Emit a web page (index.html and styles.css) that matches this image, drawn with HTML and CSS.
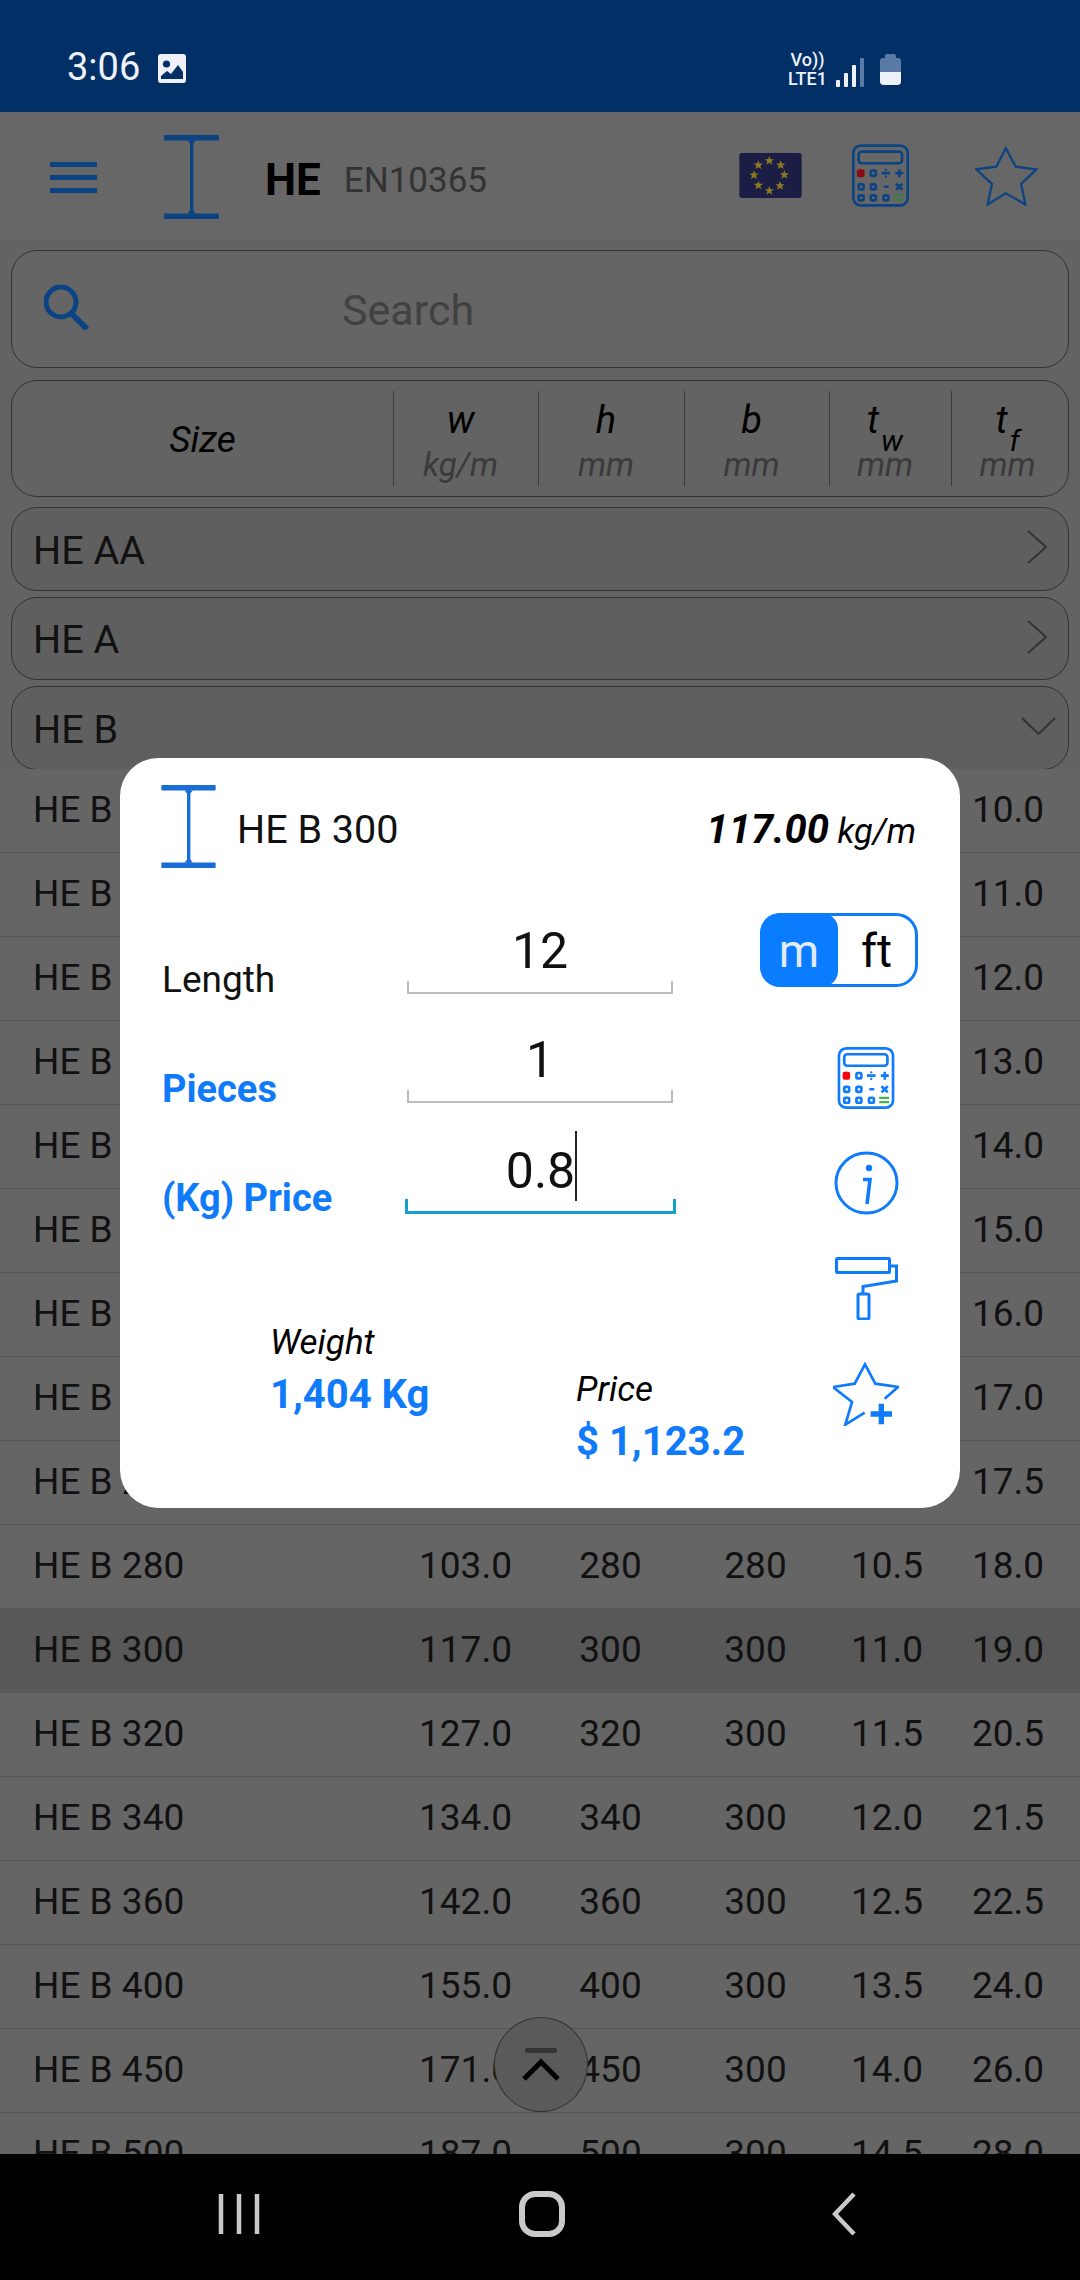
FILE: index.html
```html
<!DOCTYPE html>
<html lang="en">
<head>
    <meta charset="UTF-8">
    <meta name="viewport" content="width=device-width, initial-scale=1.0">
    <title>HE EN10365</title>
    <link rel="stylesheet" href="styles.css">
</head>
<body>

<!-- shared icons -->
<svg class="icon-defs" aria-hidden="true">
    <defs>
        <symbol id="beam" viewBox="0 0 55 84">
            <rect x="0" y="0" width="55" height="5.5" rx="1" fill="currentColor"/>
            <rect x="26" y="4" width="3.4" height="76" fill="currentColor"/>
            <path d="M23.5 5.5h8.4l-2.5 3h-3.4zM23.5 78.5h8.4l-2.5-3h-3.4z" fill="currentColor"/>
            <rect x="0" y="78.5" width="55" height="5.5" rx="1" fill="currentColor"/>
        </symbol>
        <symbol id="calc" viewBox="112 78 172 188">
            <g fill="none" stroke="currentColor" stroke-width="8">
                <rect x="116" y="82" width="164" height="180" rx="22"/>
                <rect x="132" y="100" width="131" height="35" rx="9"/>
                <rect x="169" y="157" width="15" height="16" rx="4"/>
                <rect x="132" y="199" width="15" height="15" rx="4"/>
                <rect x="169" y="199" width="15" height="15" rx="4"/>
                <rect x="132" y="232" width="15" height="15" rx="4"/>
                <rect x="169" y="232" width="15" height="15" rx="4"/>
                <rect x="207" y="232" width="15" height="15" rx="4"/>
                <path d="M201 165h26M243 165h24M255 153v24M208 206h15M245 197l19 18M264 197l-19 18"/>
            </g>
            <circle cx="214" cy="155" r="3.5" fill="currentColor"/>
            <circle cx="214" cy="175" r="3.5" fill="currentColor"/>
            <rect class="calc-red" x="127" y="153" width="23" height="24" rx="6"/>
            <path class="calc-green" d="M238 232h30M238 245h30" fill="none" stroke-width="7"/>
        </symbol>
        <polygon id="eu-star" points="0,-14 3.800,-4.500 14,-4.500 6,2 9,12 0,6.500 -9,12 -6,2 -14,-4.500 -3.800,-4.500"/>
    </defs>
</svg>

<div class="app">

    <header class="status-bar">
        <span class="status-time">3:06</span>
        <svg class="status-pic" viewBox="0 0 28 29">
            <rect width="28" height="29" rx="3" fill="#eef2f8"/>
            <circle cx="8.500" cy="10" r="3.600" fill="#012f66"/>
            <path d="M3 25v-3l6-5 4 3 7-9 5 7v7z" fill="#012f66"/>
        </svg>
        <div class="status-right">
            <div class="status-net">
                <span>Vo))</span>
                <span>LTE1</span>
            </div>
            <div class="signal">
                <i class="bar-1"></i>
                <i class="bar-2"></i>
                <i class="bar-3"></i>
                <i class="bar-4"></i>
            </div>
            <div class="battery"><div class="battery-level"></div></div>
        </div>
    </header>

    <div class="app-bar">
        <div class="menu-btn"><i></i><i></i><i></i></div>
        <svg class="app-beam"><use href="#beam"/></svg>
        <span class="app-title">HE</span>
        <span class="app-norm">EN10365</span>
        <svg class="eu-flag" viewBox="118 400 187 135">
            <rect x="118" y="400" width="187" height="135" rx="8" fill="#1b1d45"/>
            <g fill="#8b7b1f">
                <use href="#eu-star" x="208" y="423"/>
                <use href="#eu-star" x="242" y="436"/>
                <use href="#eu-star" x="253" y="465"/>
                <use href="#eu-star" x="240" y="498"/>
                <use href="#eu-star" x="208" y="513"/>
                <use href="#eu-star" x="175" y="497"/>
                <use href="#eu-star" x="162" y="466"/>
                <use href="#eu-star" x="175" y="436"/>
            </g>
        </svg>
        <svg class="app-calc"><use href="#calc"/></svg>
        <svg class="app-star" viewBox="825 378 190 180">
            <path d="M918 384l30 56 62 8-46 44 13 62-59-34-55 34 13-62-47-44 60-8z" fill="none" stroke="currentColor" stroke-width="7"/>
        </svg>
    </div>

    <div class="search-box">
        <svg class="search-icon" viewBox="0 0 46 46">
            <circle cx="17" cy="18" r="15" fill="none" stroke="currentColor" stroke-width="5"/>
            <path d="M28 30l15 15" stroke="currentColor" stroke-width="6"/>
        </svg>
        <span class="search-text">Search</span>
    </div>

    <div class="table-head">
        <div class="head-size">Size</div>
        <div class="head-col"><span class="head-sym">w</span><span class="head-unit">kg/m</span></div>
        <div class="head-col"><span class="head-sym">h</span><span class="head-unit">mm</span></div>
        <div class="head-col"><span class="head-sym">b</span><span class="head-unit">mm</span></div>
        <div class="head-col"><span class="head-sym">t<sub>w</sub></span><span class="head-unit">mm</span></div>
        <div class="head-col head-last"><span class="head-sym">t<sub>f</sub></span><span class="head-unit">mm</span></div>
    </div>

    <div class="group">
        <span>HE AA</span>
        <svg class="chev-right" viewBox="0 0 20 34"><path d="M1 1l18 16L1 33"/></svg>
    </div>
    <div class="group">
        <span>HE A</span>
        <svg class="chev-right" viewBox="0 0 20 34"><path d="M1 1l18 16L1 33"/></svg>
    </div>
    <div class="group">
        <span>HE B</span>
        <svg class="chev-down" viewBox="0 0 35 18"><path d="M1 1l16.500 16L34 1"/></svg>
    </div>

    <div class="size-list">
        <div class="size-row"><span>HE B 100</span><span>20.4</span><span>100</span><span>100</span><span>6.0</span><span>10.0</span></div>
        <div class="size-row"><span>HE B 120</span><span>26.7</span><span>120</span><span>120</span><span>6.5</span><span>11.0</span></div>
        <div class="size-row"><span>HE B 140</span><span>33.7</span><span>140</span><span>140</span><span>7.0</span><span>12.0</span></div>
        <div class="size-row"><span>HE B 160</span><span>42.6</span><span>160</span><span>160</span><span>8.0</span><span>13.0</span></div>
        <div class="size-row"><span>HE B 180</span><span>51.2</span><span>180</span><span>180</span><span>8.5</span><span>14.0</span></div>
        <div class="size-row"><span>HE B 200</span><span>61.3</span><span>200</span><span>200</span><span>9.0</span><span>15.0</span></div>
        <div class="size-row"><span>HE B 220</span><span>71.5</span><span>220</span><span>220</span><span>9.5</span><span>16.0</span></div>
        <div class="size-row"><span>HE B 240</span><span>83.2</span><span>240</span><span>240</span><span>10.0</span><span>17.0</span></div>
        <div class="size-row"><span>HE B 260</span><span>93.0</span><span>260</span><span>260</span><span>10.0</span><span>17.5</span></div>
        <div class="size-row"><span>HE B 280</span><span>103.0</span><span>280</span><span>280</span><span>10.5</span><span>18.0</span></div>
        <div class="size-row selected"><span>HE B 300</span><span>117.0</span><span>300</span><span>300</span><span>11.0</span><span>19.0</span></div>
        <div class="size-row"><span>HE B 320</span><span>127.0</span><span>320</span><span>300</span><span>11.5</span><span>20.5</span></div>
        <div class="size-row"><span>HE B 340</span><span>134.0</span><span>340</span><span>300</span><span>12.0</span><span>21.5</span></div>
        <div class="size-row"><span>HE B 360</span><span>142.0</span><span>360</span><span>300</span><span>12.5</span><span>22.5</span></div>
        <div class="size-row"><span>HE B 400</span><span>155.0</span><span>400</span><span>300</span><span>13.5</span><span>24.0</span></div>
        <div class="size-row"><span>HE B 450</span><span>171.0</span><span>450</span><span>300</span><span>14.0</span><span>26.0</span></div>
        <div class="size-row"><span>HE B 500</span><span>187.0</span><span>500</span><span>300</span><span>14.5</span><span>28.0</span></div>
    </div>

    <nav class="nav-bar">
        <svg class="nav-recents" viewBox="0 0 42 44">
            <path d="M3 2v40M21 2v40M39 2v40"/>
        </svg>
        <svg class="nav-home" viewBox="0 0 46 46">
            <rect x="3" y="3" width="40" height="40" rx="13"/>
        </svg>
        <svg class="nav-back" viewBox="0 0 24 44">
            <path d="M22 2L3 22l19 20"/>
        </svg>
    </nav>

    <!-- scroll to top, lies over the list -->
    <div class="scroll-top">
        <i class="scroll-bar"></i>
        <svg class="scroll-chev" viewBox="0 0 40 24"><path d="M3 21L20 4l17 17"/></svg>
    </div>

    <!-- piece dialog -->
    <section class="modal">
        <div class="modal-head">
            <svg class="modal-beam"><use href="#beam"/></svg>
            <span class="modal-name">HE B 300</span>
            <span class="modal-weight"><b>117.00</b> kg/m</span>
        </div>
        <div class="modal-body">
            <div class="modal-left">
                <div class="fields">
                    <div class="field">
                        <span class="field-label">Length</span>
                        <div class="field-input">12</div>
                    </div>
                    <div class="field">
                        <span class="field-label blue">Pieces</span>
                        <div class="field-input">1</div>
                    </div>
                    <div class="field">
                        <span class="field-label blue">(Kg) Price</span>
                        <div class="field-input focused">0.8<i class="caret"></i></div>
                    </div>
                </div>
                <div class="totals">
                    <div class="total total-weight">
                        <span class="total-label">Weight</span>
                        <span class="total-value">1,404 Kg</span>
                    </div>
                    <div class="total total-price">
                        <span class="total-label">Price</span>
                        <span class="total-value">$ 1,123.2</span>
                    </div>
                </div>
            </div>
            <div class="modal-side">
                <div class="unit-toggle">
                    <span class="unit active">m</span>
                    <span class="unit">ft</span>
                </div>
                <div class="side-icons">
                    <svg class="side-calc"><use href="#calc"/></svg>
                    <svg class="side-info" viewBox="0 0 65 64">
                        <ellipse cx="32.500" cy="32" rx="30.500" ry="30" fill="none" stroke="currentColor" stroke-width="3"/>
                        <circle cx="35" cy="17" r="3.200" fill="currentColor"/>
                        <path d="M29 28.500h7L33 53" fill="none" stroke="currentColor" stroke-width="3.600"/>
                    </svg>
                    <svg class="side-roller" viewBox="0 0 63 63">
                        <g fill="none" stroke="currentColor" stroke-width="3">
                            <rect x="1.500" y="1.500" width="53" height="14" rx="1"/>
                            <path d="M55 9h6.500v15L28 29.500V37"/>
                            <rect x="23" y="37" width="11" height="25" rx="1.500"/>
                        </g>
                    </svg>
                    <svg class="side-star" viewBox="100 60 198 192">
                        <path d="M255 170l40-35-68-10-31-58-31 58-65 10 57 45-20 68 58-36" fill="none" stroke="currentColor" stroke-width="8"/>
                        <path d="M213 216h64M245 185v62" fill="none" stroke="currentColor" stroke-width="16"/>
                    </svg>
                </div>
            </div>
        </div>
    </section>

</div>

</body>
</html>
```

FILE: styles.css
```css
* {
    box-sizing: border-box;
}

body {
    margin: 0;
    font-family: Roboto, "Liberation Sans", sans-serif;
    background-color: #636363;
}

.icon-defs {
    position: absolute;
    width: 0;
    height: 0;
}

.app {
    position: relative;
    display: flex;
    flex-direction: column;
    width: 1080px;
    height: 2280px;
    overflow: hidden;
    color: #111;
    background-color: #636363;
}

/* status bar */
.status-bar {
    display: flex;
    align-items: center;
    flex-shrink: 0;
    height: 112px;
    padding: 0 179px 0 67px;
    background-color: #012f66;
    color: #eef2f8;
}

.status-time {
    font-size: 38px;
    line-height: 40px;
    margin-top: 21px;
}

.status-pic {
    width: 28px;
    height: 29px;
    margin: 25px 0 0 18px;
}

.status-right {
    display: flex;
    align-items: flex-end;
    margin-left: auto;
    margin-top: 25px;
}

.status-net {
    display: flex;
    flex-direction: column;
    align-items: center;
    font-size: 18px;
    line-height: 19px;
    font-weight: 500;
    margin-right: 9px;
}

.signal {
    display: flex;
    align-items: flex-end;
    gap: 4px;
    margin-bottom: 1px;
}

.signal i {
    display: block;
    width: 4px;
    background-color: #eef2f8;
    border-radius: 1px;
}

.bar-1 { height: 7px; }
.bar-2 { height: 14px; }
.bar-3 { height: 22px; }

.signal .bar-4 {
    height: 29px;
    background-color: #5a7ba5;
}

.battery {
    position: relative;
    display: flex;
    align-items: flex-end;
    width: 21px;
    height: 27px;
    margin: 0 0 3px 16px;
    background-color: #5a7ba5;
    border-radius: 3px 3px 4px 4px;
}

.battery::before {
    content: "";
    position: absolute;
    top: -4px;
    left: 5px;
    width: 11px;
    height: 4px;
    background-color: #5a7ba5;
    border-radius: 2px 2px 0 0;
}

.battery-level {
    width: 100%;
    height: 13px;
    background-color: #eef2f8;
    border-radius: 0 0 4px 4px;
}

/* app bar */
.app-bar {
    display: flex;
    align-items: center;
    flex-shrink: 0;
    height: 127px;
    padding-left: 50px;
    background-color: #676767;
    color: #0c4483;
}

.menu-btn {
    display: flex;
    flex-direction: column;
    gap: 8px;
    width: 47px;
    margin-top: 4px;
}

.menu-btn i {
    display: block;
    height: 5px;
    background-color: currentColor;
}

.app-beam {
    width: 55px;
    height: 84px;
    margin: 2px 0 0 67px;
}

.app-title {
    font-size: 44px;
    font-weight: 700;
    color: #000;
    margin: 9px 0 0 46px;
}

.app-norm {
    font-size: 35px;
    color: #333;
    margin: 9px 0 0 23px;
}

.eu-flag {
    width: 63px;
    height: 45px;
    margin: 0 0 0 252px;
}

.app-calc {
    width: 57px;
    height: 63px;
    margin: 0 0 0 50px;
    --red: #8a0b10;
    --green: #3d7a4a;
}

.app-star {
    width: 63px;
    height: 60px;
    margin: 0 0 0 66px;
}

.calc-red {
    fill: var(--red, #f5060f);
}

.calc-green {
    stroke: var(--green, #4caf50);
}

/* search */
.search-box {
    display: flex;
    align-items: center;
    flex-shrink: 0;
    height: 118px;
    margin: 11px 11px 0;
    padding-left: 32px;
    border: 1.500px solid #333;
    border-radius: 26px;
    background-color: #656565;
}

.search-icon {
    width: 46px;
    height: 46px;
    color: #0c4483;
    margin-top: -4px;
}

.search-text {
    font-size: 43px;
    color: #414141;
    margin-left: 252px;
    margin-top: 1px;
}

/* column titles */
.table-head {
    display: grid;
    grid-template-columns: 381px 145px 146px 145px 122px 1fr;
    flex-shrink: 0;
    height: 117px;
    margin: 12px 11px 0;
    padding: 10px 0;
    border: 1.500px solid #333;
    border-radius: 26px;
    font-style: italic;
}

.head-size {
    align-self: center;
    text-align: center;
    font-size: 37px;
    color: #000;
    margin-top: 2px;
}

.head-col {
    display: flex;
    flex-direction: column;
    align-items: center;
    padding: 7px 11px 0 0;
    border-left: 1px solid #3c3c3c;
}

.head-last {
    padding-right: 5px;
}

.head-sym {
    font-size: 38px;
    line-height: 44px;
    color: #000;
    white-space: nowrap;
}

.head-sym sub {
    font-size: 30px;
    line-height: 0;
    vertical-align: -18px;
    margin-left: 2px;
}

.head-unit {
    font-size: 33px;
    line-height: 40px;
    color: #3a3a3a;
    margin-top: 3px;
}

/* group rows */
.group {
    display: flex;
    align-items: center;
    justify-content: space-between;
    flex-shrink: 0;
    height: 83.500px;
    margin: 6px 11px 0;
    padding: 3px 20px 0 21px;
    border: 1.500px solid #333;
    border-radius: 26px;
    background-color: #5f5f5f;
    font-size: 39.500px;
}

.table-head + .group {
    margin-top: 10px;
}

.group svg {
    fill: none;
    stroke: #333;
    stroke-width: 2;
}

.chev-right {
    width: 20px;
    height: 34px;
    margin: -6px 1px 0 0;
}

.chev-down {
    width: 35px;
    height: 18px;
    margin: -6px -8px 0 0;
}

/* sizes */
.size-list {
    flex: 1;
    min-height: 0;
    overflow: hidden;
    margin-top: -0.500px;
    background-color: #656565;
}

.size-row {
    display: grid;
    grid-template-columns: 393px 145px 145px 145px 118px 124px;
    height: 84px;
    padding-top: 16px;
    border-bottom: 1.500px solid #555;
    font-size: 37px;
    line-height: 50px;
    text-align: center;
}

.size-row span:first-child {
    text-align: left;
    padding-left: 33px;
}

.size-row.selected {
    background-color: #585858;
}

/* navigation */
.nav-bar {
    position: relative;
    flex-shrink: 0;
    display: grid;
    grid-template-columns: 478px 301px 1fr;
    align-items: center;
    height: 126px;
    padding-bottom: 6px;
    background-color: #000;
}

.nav-bar svg {
    fill: none;
    stroke: #c9c9c9;
}

.nav-recents {
    width: 42px;
    height: 44px;
    stroke-width: 4.500;
    justify-self: center;
}

.nav-home {
    width: 46px;
    height: 46px;
    stroke-width: 6;
    margin-left: 41px;
}

.nav-back {
    width: 24px;
    height: 44px;
    stroke-width: 4.500;
    margin-left: 53px;
}

/* scroll to top */
.scroll-top {
    position: absolute;
    left: 494px;
    top: 2017px;
    display: flex;
    flex-direction: column;
    align-items: center;
    width: 94px;
    height: 95px;
    padding-top: 30px;
    border: 1px solid #333;
    border-radius: 50%;
    background-color: #5a5a5a;
}

.scroll-bar {
    display: block;
    width: 32px;
    height: 5px;
    background-color: #333;
    border-radius: 2px;
}

.scroll-chev {
    width: 40px;
    height: 24px;
    margin-top: 5px;
    fill: none;
    stroke: #000;
    stroke-width: 5;
}

/* dialog */
.modal {
    position: absolute;
    left: 120px;
    top: 758px;
    width: 840px;
    height: 750px;
    border-radius: 38px;
    background-color: #fff;
    color: #0f7bfa;
}

.modal-head {
    display: flex;
    align-items: center;
    padding: 27px 44px 0 41px;
}

.modal-beam {
    width: 55px;
    height: 83px;
    color: #1a6dd6;
}

.modal-name {
    font-size: 39.500px;
    color: #111;
    margin: 5px 0 0 21px;
}

.modal-weight {
    margin: 5px 0 0 auto;
    font-size: 34.500px;
    font-style: italic;
    color: #000;
}

.modal-weight b {
    font-size: 40px;
}

.modal-body {
    display: flex;
}

.modal-left {
    width: 640px;
    padding-left: 42px;
}

.fields {
    padding-top: 17px;
}

.field {
    display: flex;
    align-items: flex-end;
    height: 109px;
}

.field-label {
    width: 245px;
    font-size: 37px;
    line-height: 42px;
    color: #111;
    margin-bottom: -7px;
}

.field-label.blue {
    font-size: 38px;
    font-weight: 700;
    color: #0f7bfa;
}

.field-input {
    position: relative;
    width: 266px;
    padding-bottom: 15px;
    font-size: 50px;
    line-height: 56px;
    text-align: center;
    color: #111;
}

.field-input::after {
    content: "";
    position: absolute;
    left: 0;
    right: 0;
    bottom: 0;
    height: 11px;
    border: 2px solid #bdbdbd;
    border-top: none;
}

.field-input.focused {
    margin: 0 -3px -2px -2px;
    width: 271px;
}

.field-input.focused::after {
    height: 12px;
    border: 3.500px solid #14a0c8;
    border-top: none;
}

.caret {
    position: absolute;
    left: 170px;
    bottom: 13px;
    width: 2px;
    height: 70px;
    background-color: #222;
}

.totals {
    display: flex;
    align-items: flex-start;
    padding: 111px 0 0 108px;
}

.total {
    display: flex;
    flex-direction: column;
}

.total-weight {
    width: 306px;
}

.total-price {
    margin-top: 47px;
}

.total-label {
    font-size: 35px;
    line-height: 40px;
    font-style: italic;
    color: #000;
}

.total-value {
    font-size: 40px;
    line-height: 46px;
    font-weight: 700;
    color: #0f7bfa;
    margin-top: 9px;
}

.modal-side {
    flex: 1;
    padding-top: 45px;
}

.unit-toggle {
    display: flex;
    width: 158px;
    height: 74px;
    border: 3px solid #0f7bfa;
    border-radius: 22px;
    font-size: 46px;
    line-height: 70px;
    color: #000;
}

.unit {
    flex: 1;
    text-align: center;
}

.unit.active {
    flex: 0 0 78px;
    margin: -3px 0 -3px -3px;
    line-height: 76px;
    border-radius: 20px 16px 16px 20px;
    background-color: #0a7cff;
    color: #e3ebf5;
}

.side-icons {
    display: flex;
    flex-direction: column;
    align-items: center;
    gap: 42px;
    width: 66px;
    margin: 60px 0 0 73px;
}

.side-calc {
    width: 58px;
    height: 62px;
}

.side-info {
    width: 65px;
    height: 64px;
}

.side-roller {
    width: 63px;
    height: 63px;
}

.side-star {
    width: 66px;
    height: 64px;
}
```
